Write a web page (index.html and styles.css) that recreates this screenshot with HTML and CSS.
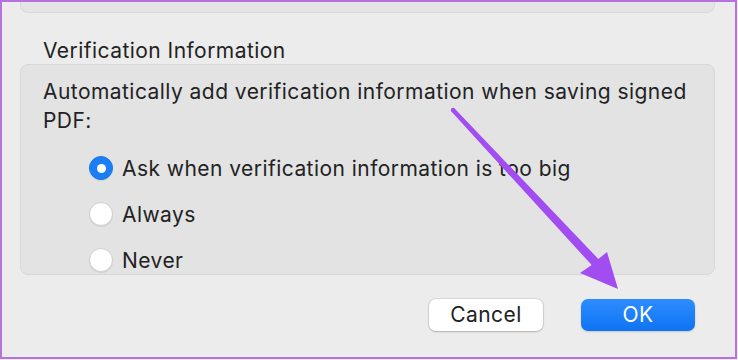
FILE: index.html
```html
<!DOCTYPE html>
<html lang="en">
<head>
<meta charset="utf-8">
<title>Verification Information</title>
<link rel="stylesheet" href="styles.css">
</head>
<body>
<div class="frame">
  <div class="top-box"></div>
  <div class="section-title">Verification Information</div>
  <div class="group">
    <p class="desc">Automatically add verification information when saving signed PDF:</p>
    <div class="radios">
      <label class="radio-row"><span class="radio checked"></span><span>Ask when verification information is too big</span></label>
      <label class="radio-row"><span class="radio"></span><span>Always</span></label>
      <label class="radio-row"><span class="radio"></span><span>Never</span></label>
    </div>
  </div>
  <div class="buttons">
    <button class="btn btn-cancel">Cancel</button>
    <button class="btn btn-ok">OK</button>
  </div>
  <svg class="arrow" width="738" height="360" viewBox="0 0 738 360" xmlns="http://www.w3.org/2000/svg">
    <circle cx="453" cy="110" r="2.2" fill="#a24df2"/>
    <polygon fill="#a24df2" points="454.6,108.4 598.3,258.9 607,252 618,289 580,273 591.7,265.1 451.4,111.6"/>
  </svg>
</div>
</body>
</html>
```

FILE: styles.css
```css
* { box-sizing: border-box; }
html, body { margin: 0; padding: 0; }
body {
  background: #ececec;
  font-family: Inter, "Noto Sans", "Liberation Sans", sans-serif;
  color: #222;
  letter-spacing: 0.45px;
}
.frame {
  position: relative;
  width: 737px;
  height: 359px;
  border: 2px solid #b573e2;
  background: #ececec;
  display: flex;
  flex-direction: column;
}
.top-box {
  margin: 0 20px 0 18px;
  height: 11px;
  background: #e4e4e5;
  border: 1px solid #dadada;
  border-top: none;
  border-radius: 0 0 8px 8px;
}
.section-title {
  margin: 26px 0 0 41px;
  font-size: 21px;
  line-height: 24px;
  height: 24px;
}
.group {
  margin: 1px 20px 0 18px;
  height: 211px;
  background: #e3e3e4;
  border: 1px solid #d8d8d9;
  border-radius: 8px;
  padding: 12px 10px 0 22px;
}
.desc {
  margin: 0;
  font-size: 21px;
  line-height: 29px;
}
.radios {
  margin: 10px 0 0 46px;
  display: flex;
  flex-direction: column;
}
.radio-row {
  display: flex;
  align-items: center;
  height: 46px;
  font-size: 21px;
  gap: 9px;
}
.radio {
  width: 24px;
  height: 24px;
  border-radius: 50%;
  background: #fff;
  border: 1px solid #cfcfcf;
  box-shadow: 0 1px 1px rgba(0,0,0,0.08);
  flex: none;
  position: relative;
}
.radio.checked {
  background: #1c7ef5;
  border-color: #1a76ea;
}
.radio.checked::after {
  content: "";
  position: absolute;
  left: 50%;
  top: 50%;
  width: 9px;
  height: 9px;
  margin: -4.5px 0 0 -4.5px;
  border-radius: 50%;
  background: #fff;
}
.buttons {
  margin: 24px 40px 0 0;
  display: flex;
  justify-content: flex-end;
  gap: 38px;
}
.btn {
  width: 114px;
  height: 32px;
  border-radius: 7px;
  font-family: inherit;
  font-size: 21px;
  letter-spacing: 0.45px;
  line-height: 30px;
  padding: 0;
  border: none;
}
.btn-cancel {
  background: #fff;
  color: #222;
  box-shadow: 0 0 0 1px rgba(0,0,0,0.08), 0 1px 2px rgba(0,0,0,0.18);
}
.btn-ok {
  background: linear-gradient(#2d8dff, #0f73f2);
  color: #fff;
  box-shadow: 0 1px 2px rgba(0,0,0,0.15);
}
.arrow {
  position: absolute;
  left: -2px;
  top: -2px;
  pointer-events: none;
}
```
